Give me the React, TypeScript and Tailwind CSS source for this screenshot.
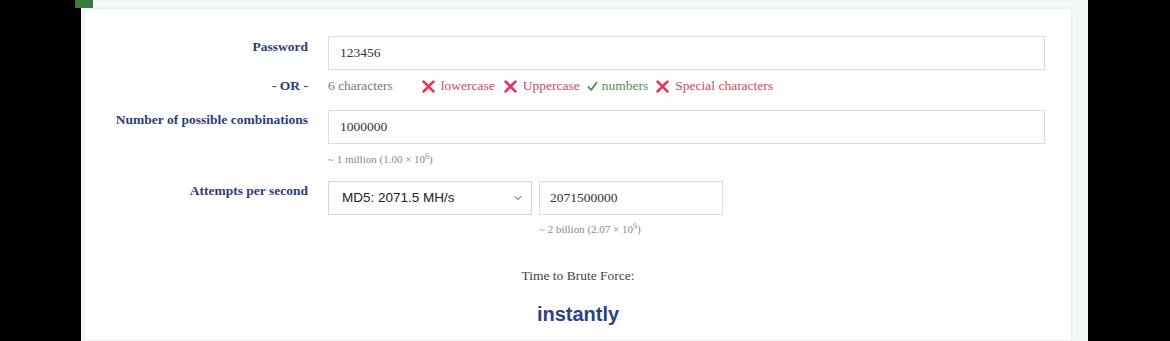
import { ChevronDown } from 'lucide-react';

const serif = { fontFamily: '"Liberation Serif", "Times New Roman", serif' };

function Cross() {
  return (
    <svg viewBox="0 0 12 12" className="h-[13px] w-[13px] shrink-0" aria-hidden="true">
      <path d="M1.5 1.5 L10.5 10.5 M10.5 1.5 L1.5 10.5" stroke="#e0385c" strokeWidth="2.6" strokeLinecap="round" />
    </svg>
  );
}

function Check() {
  return (
    <svg viewBox="0 0 12 12" className="h-[11px] w-[11px] shrink-0" aria-hidden="true">
      <path d="M1.5 6.5 L4.5 9.8 L10.5 1.8" stroke="#3f8a3f" strokeWidth="1.8" fill="none" strokeLinecap="round" strokeLinejoin="round" />
    </svg>
  );
}

function Label({ children }: { children: React.ReactNode }) {
  return (
    <div className="w-[223px] shrink-0 text-right text-[13.5px] font-bold leading-[16px] text-[#2b3d7b]">
      {children}
    </div>
  );
}

export default function App() {
  return (
    <div className="relative flex h-[341px] w-[1170px] overflow-hidden bg-black" style={serif}>
      <div className="absolute left-[75px] top-0 h-[8px] w-[18px] bg-[#3b7a3e]" />
      <div className="ml-[81px] h-full w-[1007px] bg-[#f3faf6] pl-[3px] pt-[8px]">
        <div className="h-full w-[988px] border border-[#eef0ee] bg-white pt-[27px] shadow-[0_0_2px_rgba(0,0,0,0.06)]">
          {/* password */}
          <div className="flex items-start">
            <Label><div className="pt-[3px]">Password</div></Label>
            <div className="ml-[20px] flex h-[34px] w-[717px] items-center border border-[#dcdcdc] px-[11px] text-[13.5px] text-[#333]">
              123456
            </div>
          </div>

          {/* or */}
          <div className="mt-[7px] flex items-center leading-[18px]">
            <Label>- OR -</Label>
            <div className="ml-[20px] flex items-center text-[13.5px]">
              <span className="text-[#777]">6 characters</span>
              <span className="ml-[29px] flex items-center gap-[6px] text-[#c94a5c]"><Cross />lowercase</span>
              <span className="ml-[9px] flex items-center gap-[6px] text-[#c94a5c]"><Cross />Uppercase</span>
              <span className="ml-[7px] flex items-center gap-[4px] text-[#4e8f4e]"><Check />numbers</span>
              <span className="ml-[8px] flex items-center gap-[6px] text-[#c94a5c]"><Cross />Special characters</span>
            </div>
          </div>

          {/* combinations */}
          <div className="mt-[15px] flex items-start">
            <Label><div className="pt-[2px]">Number of possible combinations</div></Label>
            <div className="ml-[20px]">
              <div className="flex h-[34px] w-[717px] items-center border border-[#dcdcdc] px-[11px] text-[13.5px] text-[#333]">
                1000000
              </div>
              <div className="mt-[8px] text-[11px] leading-[14px] text-[#888]">
                ~ 1 million (1.00 × 10<sup className="text-[8px]">6</sup>)
              </div>
            </div>
          </div>

          {/* attempts */}
          <div className="mt-[15px] flex items-start">
            <Label><div className="pt-[2px]">Attempts per second</div></Label>
            <div className="ml-[20px] flex gap-[7px]">
              <div
                className="flex h-[34px] w-[204px] items-center justify-between border border-[#d4d4d4] pl-[13px] pr-[7px] text-[13.5px] text-[#222]"
                style={{ fontFamily: '"Liberation Sans", Arial, sans-serif' }}
              >
                MD5: 2071.5 MH/s
                <ChevronDown className="h-[12px] w-[12px] text-[#444]" strokeWidth={2} />
              </div>
              <div>
                <div className="flex h-[34px] w-[184px] items-center border border-[#dcdcdc] px-[10px] text-[13.5px] text-[#333]">
                  2071500000
                </div>
                <div className="mt-[7px] text-[11px] leading-[14px] text-[#888]">
                  ~ 2 billion (2.07 × 10<sup className="text-[8px]">9</sup>)
                </div>
              </div>
            </div>
          </div>

          {/* result */}
          <div className="mt-[32px] text-center text-[13.5px] leading-[16px] text-[#444]">Time to Brute Force:</div>
          <div
            className="mt-[18px] text-center text-[20px] font-bold leading-[24px] text-[#2d4283]"
            style={{ fontFamily: '"Liberation Sans", Arial, sans-serif' }}
          >
            instantly
          </div>
        </div>
      </div>
    </div>
  );
}
